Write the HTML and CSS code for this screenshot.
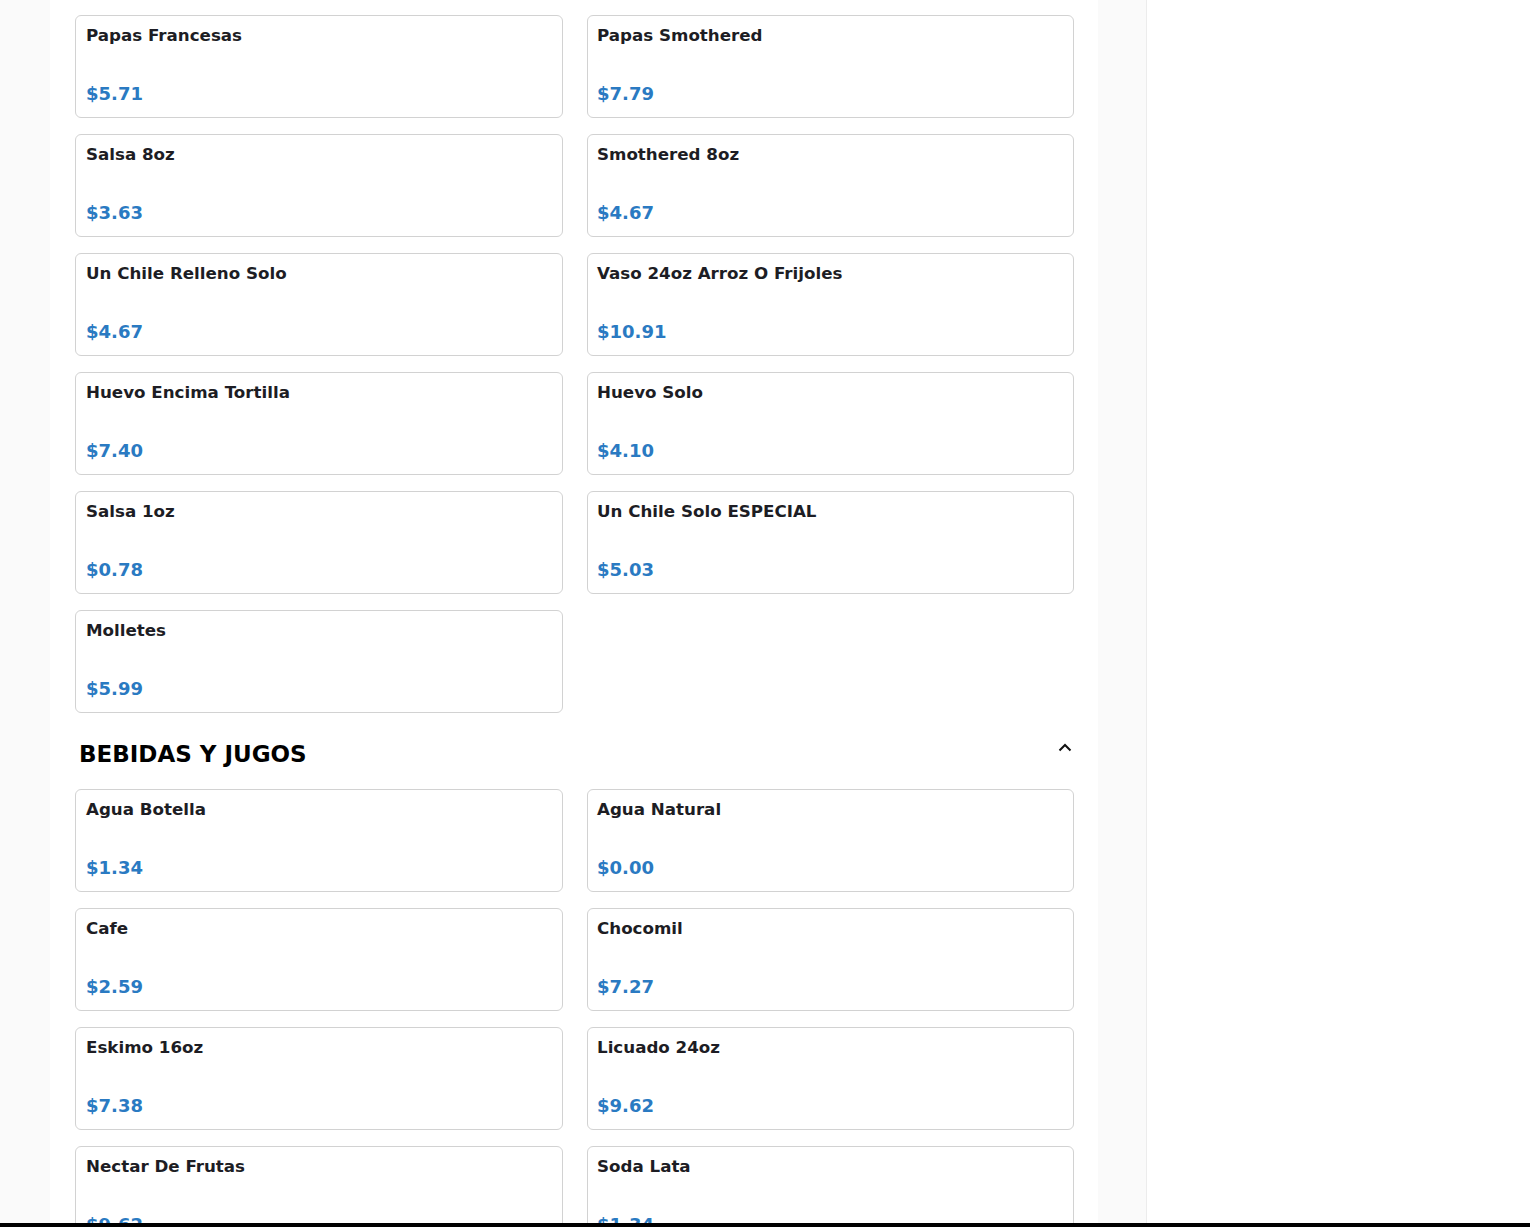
FILE: index.html
```html
<!DOCTYPE html>
<html lang="es">
  <head>
    <meta charset="UTF-8" />
    <meta name="viewport" content="width=device-width, initial-scale=1.0" />
    <title>Menu</title>
    <link rel="stylesheet" href="styles.css">
  </head>
  <body>
    <div class="page">
      <main class="menu-column">
        <div class="menu-panel">
          <div class="item-grid">
            <div class="item-card"><div class="item-name">Papas Francesas</div><div class="item-price">$5.71</div></div>
            <div class="item-card"><div class="item-name">Papas Smothered</div><div class="item-price">$7.79</div></div>
            <div class="item-card"><div class="item-name">Salsa 8oz</div><div class="item-price">$3.63</div></div>
            <div class="item-card"><div class="item-name">Smothered 8oz</div><div class="item-price">$4.67</div></div>
            <div class="item-card"><div class="item-name">Un Chile Relleno Solo</div><div class="item-price">$4.67</div></div>
            <div class="item-card"><div class="item-name">Vaso 24oz Arroz O Frijoles</div><div class="item-price">$10.91</div></div>
            <div class="item-card"><div class="item-name">Huevo Encima Tortilla</div><div class="item-price">$7.40</div></div>
            <div class="item-card"><div class="item-name">Huevo Solo</div><div class="item-price">$4.10</div></div>
            <div class="item-card"><div class="item-name">Salsa 1oz</div><div class="item-price">$0.78</div></div>
            <div class="item-card"><div class="item-name">Un Chile Solo ESPECIAL</div><div class="item-price">$5.03</div></div>
            <div class="item-card"><div class="item-name">Molletes</div><div class="item-price">$5.99</div></div>
          </div>

          <div class="section-header">
            <h2>BEBIDAS Y JUGOS</h2>
            <svg class="chevron" width="16" height="16" viewBox="0 0 16 16" fill="none" stroke="#111" stroke-width="2">
              <path d="M2.5 10.5 L8 5 L13.5 10.5" />
            </svg>
          </div>

          <div class="item-grid">
            <div class="item-card"><div class="item-name">Agua Botella</div><div class="item-price">$1.34</div></div>
            <div class="item-card"><div class="item-name">Agua Natural</div><div class="item-price">$0.00</div></div>
            <div class="item-card"><div class="item-name">Cafe</div><div class="item-price">$2.59</div></div>
            <div class="item-card"><div class="item-name">Chocomil</div><div class="item-price">$7.27</div></div>
            <div class="item-card"><div class="item-name">Eskimo 16oz</div><div class="item-price">$7.38</div></div>
            <div class="item-card"><div class="item-name">Licuado 24oz</div><div class="item-price">$9.62</div></div>
            <div class="item-card"><div class="item-name">Nectar De Frutas</div><div class="item-price">$9.62</div></div>
            <div class="item-card"><div class="item-name">Soda Lata</div><div class="item-price">$1.34</div></div>
          </div>
        </div>
      </main>
      <aside class="side"></aside>
    </div>
    <div class="bottom-bar"></div>
  </body>
</html>
```

FILE: styles.css
```css
body {
  font-family: "DejaVu Sans", sans-serif;
  margin: 0;
  background-color: #ffffff;
  overflow: hidden;
}

.page {
  display: flex;
  min-height: 100vh;
}

.menu-column {
  width: 1146px;
  flex-shrink: 0;
  background-color: #fafafa;
  border-right: 1px solid #ececec;
}

.menu-panel {
  margin-left: 50px;
  width: 1048px;
  box-sizing: border-box;
  padding: 15px 24px 40px 25px;
  background-color: #ffffff;
  min-height: 100vh;
}

.side {
  flex: 1;
}

.item-grid {
  display: grid;
  grid-template-columns: 488px 487px;
  column-gap: 24px;
  row-gap: 16px;
}

.item-card {
  height: 103px;
  box-sizing: border-box;
  border: 1px solid #d2d2d2;
  border-radius: 6px;
  padding: 9px 10px 12px;
  display: flex;
  flex-direction: column;
  justify-content: space-between;
}

.item-grid .item-card:nth-child(even) {
  padding-left: 9px;
}

.item-name {
  font-size: 16.7px;
  font-weight: bold;
  line-height: 21px;
  color: #1d1d24;
}

.item-price {
  font-size: 18px;
  font-weight: bold;
  line-height: 22px;
  color: #2a7ac2;
}

.section-header {
  display: flex;
  justify-content: space-between;
  align-items: flex-start;
  margin: 23px 0 16px;
  padding: 0 1px 0 4px;
  height: 37px;
}

.section-header h2 {
  margin: 0;
  font-size: 23px;
  line-height: 37px;
  color: #000000;
}

.chevron {
  margin-top: 4px;
}

.bottom-bar {
  position: fixed;
  left: 0;
  right: 0;
  bottom: 0;
  height: 4px;
  background-color: #000000;
}
```
